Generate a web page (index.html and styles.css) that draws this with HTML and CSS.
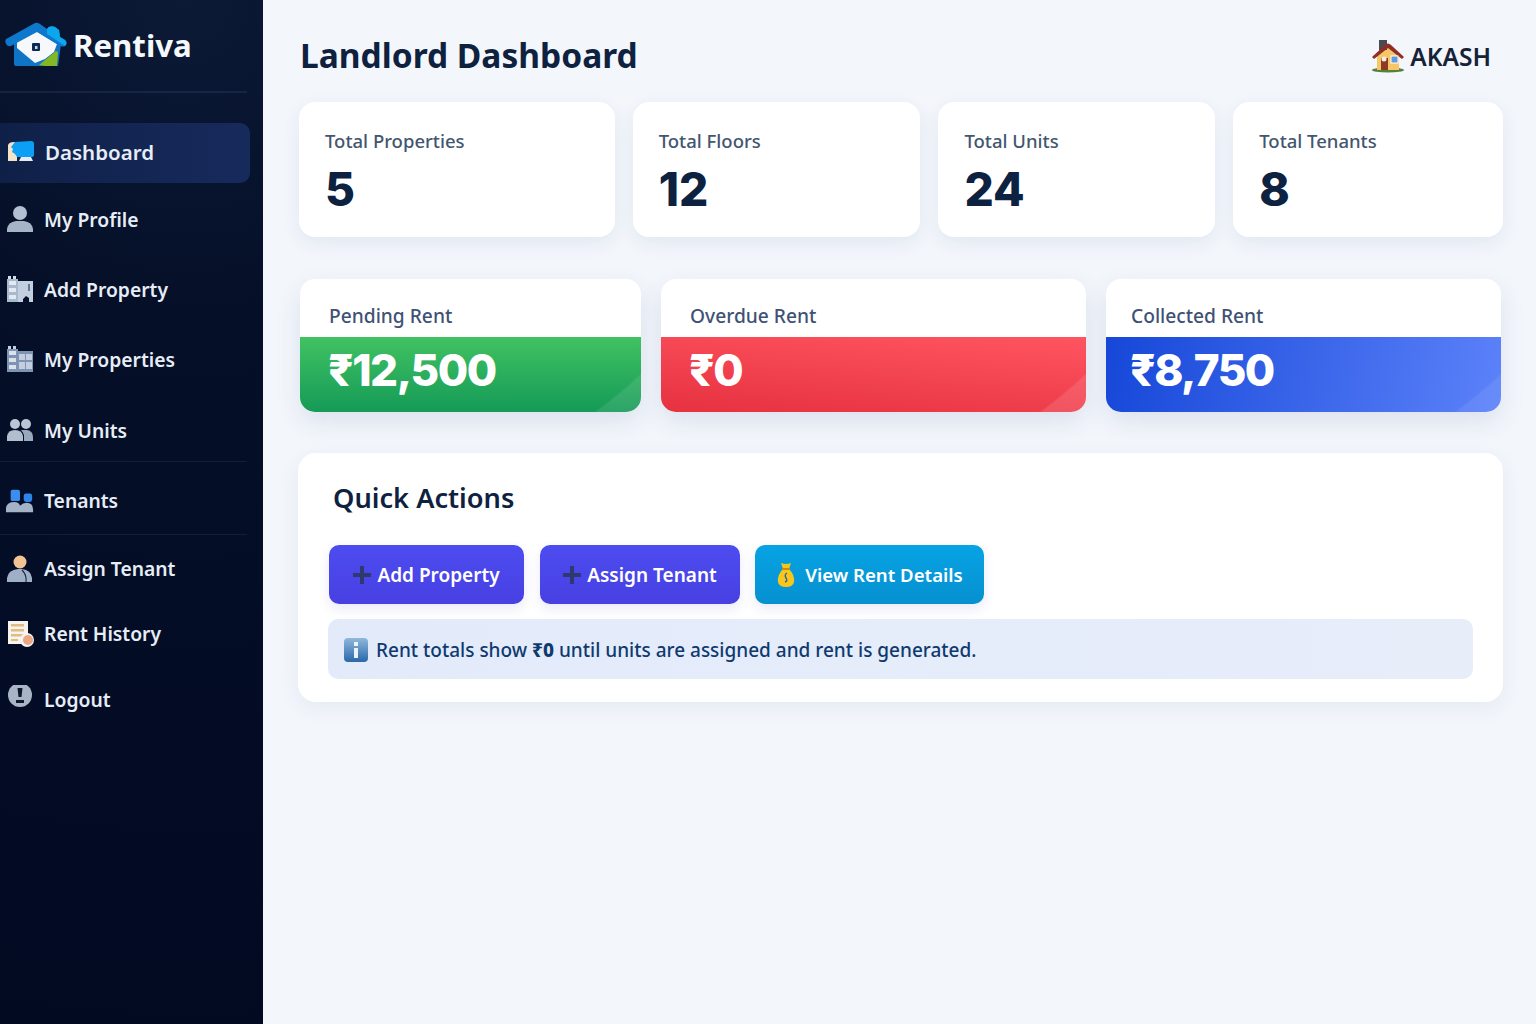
FILE: index.html
```html
<!DOCTYPE html>
<html lang="en">
<head>
<meta charset="utf-8">
<title>Rentiva</title>
<link rel="stylesheet" href="styles.css">
</head>
<body>
<div class="app">
<aside class="sidebar">
  <div class="brand">
    <svg class="logo" viewBox="0 0 62 46" width="62" height="46">
      <path d="M9 20 L9 42 Q9 44 11 44 L53 44 L56 22 L31 6Z" fill="#0f74c6"/>
      <path d="M12 20 L31 9 L52 22 L49 30 L40 37 L30 41 L12 26Z" fill="#f6f8fb"/>
      <path d="M34 43 L51 29 L53 30 L52 44 L40 44Z" fill="#84b822"/>
      <path d="M1 22 Q-1 17 3 16 L30 1 Q32 0 35 2 L42 7 Q44 3 50 5 L54 8 L55 15 L60 18 Q63 21 60 24 Q58 25 55 24 L32 10 L6 24 Q3 25 1 22Z" fill="#0d78cc"/>
      <path d="M42 7 Q44 3 50 5 L54 8 L55 15 L60 18 Q63 21 60 24 L42 12Z" fill="#0ca6ec"/>
      <rect x="27" y="21" width="8" height="8" rx="1" fill="#0b2a55"/>
      <rect x="30" y="24" width="2.500" height="3" fill="#c8d8ea"/>
    </svg>
    <span class="brand-name">Rentiva</span>
  </div>
  <div class="rule brand-rule"></div>
  <nav class="nav">
    <a class="item active"><svg class="ico" viewBox="0 0 28 24"><path d="M1 5 Q2 2 7 2 L10 3 L10 21 L1 21Z" fill="#f4e3c8"/><path d="M8 2 L24 1 Q27 1 27 4 L27 15 Q27 17 24 17 L10 17 L8 14 L5 12 L6 9 L4 7Z" fill="#0ba0f5"/><path d="M14 17 H24 L26 21 H12Z" fill="#e8edf3"/></svg><span>Dashboard</span></a>
    <a class="item profile"><svg class="ico" viewBox="0 0 28 28"><circle cx="14" cy="8" r="7" fill="#b3c0d2"/><path d="M1 27 V24 Q2 17 10 16 H18 Q26 17 27 24 V27Z" fill="#a6b4c8"/></svg><span>My Profile</span></a>
    <a class="item addprop"><svg class="ico" viewBox="0 0 28 28"><path d="M1 4 H12 V27 H1Z" fill="#a8b8cf"/><rect x="2" y="1" width="3" height="3" fill="#d5deea"/><rect x="7" y="1" width="3" height="3" fill="#d5deea"/><g fill="#e3e9f1"><rect x="3" y="6" width="7" height="4"/><rect x="3" y="13" width="7" height="4"/><rect x="3" y="20" width="7" height="4"/></g><path d="M12 6 H27 V27 H23 V23 L20 21 L17 24 V27 H12Z" fill="#c3cfde"/><rect x="22" y="9" width="2" height="7" fill="#64789a"/></svg><span>Add Property</span></a>
    <a class="item myprops"><svg class="ico" viewBox="0 0 28 28"><path d="M1 4 H12 V27 H1Z" fill="#7f93b2"/><rect x="2" y="1" width="3" height="3" fill="#c5d0df"/><rect x="7" y="1" width="3" height="3" fill="#c5d0df"/><g fill="#dbe2ec"><rect x="3" y="6" width="7" height="4"/><rect x="3" y="13" width="7" height="4"/><rect x="3" y="20" width="7" height="4"/></g><rect x="12" y="6" width="15" height="21" fill="#7f93b2"/><g fill="#c3cfde"><rect x="13" y="9" width="6" height="6"/><rect x="20" y="9" width="6" height="6"/><rect x="13" y="17" width="6" height="7"/><rect x="20" y="17" width="6" height="7"/></g></svg><span>My Properties</span></a>
    <a class="item units"><svg class="ico" viewBox="0 0 28 24"><circle cx="9" cy="6" r="5" fill="#b8c5d6"/><circle cx="20" cy="6" r="5" fill="#b8c5d6"/><path d="M1 23 V18 Q2 12 9 12 Q16 12 17 18 V23Z" fill="#b0bed0"/><path d="M18 23 V17 Q17 14 15 12 L21 12 Q27 13 27 19 V23Z" fill="#98a8bd"/></svg><span>My Units</span></a>
    <div class="rule"></div>
    <a class="item tenants"><svg class="ico" viewBox="0 0 30 26"><rect x="5" y="1" width="10" height="12" rx="2" fill="#3b8df0"/><rect x="19" y="5" width="9" height="9" rx="2.500" fill="#2f84ea"/><path d="M0 25 V20 Q1 14 9 14 Q14 14 15 18 Q18 15 22 15 Q29 15 29 22 V25Z" fill="#a4b3c8"/></svg><span>Tenants</span></a>
    <div class="rule"></div>
    <a class="item assign"><svg class="ico" viewBox="0 0 28 28"><circle cx="14" cy="7" r="6.500" fill="#f2c493"/><path d="M1 27 V23 Q2 15 12 14 H16 Q25 15 26 23 V27Z" fill="#9fb0c6"/><path d="M16 15 Q21 20 20 27" stroke="#172a48" stroke-width="1.200" fill="none"/></svg><span>Assign Tenant</span></a>
    <a class="item history"><svg class="ico" viewBox="0 0 28 28"><rect x="2" y="1" width="20" height="23" fill="#f7f5ef"/><g fill="#e2bc82"><rect x="5" y="4" width="13" height="2.500"/><rect x="5" y="9" width="13" height="2.500"/><rect x="5" y="14" width="13" height="2.500"/><rect x="5" y="19" width="7" height="2"/></g><circle cx="21" cy="20" r="7" fill="#f3f4f6"/><circle cx="22" cy="20" r="5" fill="#eda682"/></svg><span>Rent History</span></a>
    <a class="item logout"><svg class="ico" viewBox="0 0 28 28"><circle cx="14" cy="10" r="12" fill="#a9b5c6"/><path d="M11.500 3 H16.500 L15.500 12 H12.500Z" fill="#10192c"/><path d="M10 15 H18 V18 H10Z" fill="#10192c"/></svg><span>Logout</span></a>
  </nav>
</aside>
<main class="main">
  <header class="top">
    <h1>Landlord Dashboard</h1>
    <div class="user">
      <svg viewBox="0 0 34 34" width="34" height="34"><ellipse cx="17" cy="31" rx="16" ry="2.500" fill="#55813a"/><path d="M6 14 L17 6 L28 14 V31 H6Z" fill="#f6c667"/><rect x="8" y="1" width="8" height="10" fill="#4a4a50"/><path d="M1 18 L14 6 Q17 3 20 6 L33 18 L31 20 L17 9 L3 20Z" fill="#8f2d26"/><path d="M10 19 H17 V31 H10Z" fill="#8d3a25"/><circle cx="13" cy="20" r="2.500" fill="#f3efe6"/><rect x="20" y="17" width="7" height="7" fill="#5e9be0" stroke="#fff"/></svg>
      <span>AKASH</span>
    </div>
  </header>
  <section class="stats">
    <div class="card c1"><p>Total Properties</p><b>5</b></div>
    <div class="card c2"><p>Total Floors</p><b>12</b></div>
    <div class="card c3"><p>Total Units</p><b>24</b></div>
    <div class="card c4"><p>Total Tenants</p><b>8</b></div>
  </section>
  <section class="rents">
    <div class="rent r1"><p>Pending Rent</p><div class="amt green">₹12,500</div></div>
    <div class="rent r2"><p>Overdue Rent</p><div class="amt red">₹0</div></div>
    <div class="rent r3"><p>Collected Rent</p><div class="amt blue">₹8,750</div></div>
  </section>
  <section class="quick">
    <h2>Quick Actions</h2>
    <div class="btns">
      <a class="btn indigo b1"><svg viewBox="0 0 18 18" width="18" height="18"><path d="M7 0 H11 V7 H18 V11 H11 V18 H7 V11 H0 V7 H7Z" fill="#2d3a6e"/></svg>Add Property</a>
      <a class="btn indigo b2"><svg viewBox="0 0 18 18" width="18" height="18"><path d="M7 0 H11 V7 H18 V11 H11 V18 H7 V11 H0 V7 H7Z" fill="#2d3a6e"/></svg>Assign Tenant</a>
      <a class="btn sky b3"><svg viewBox="0 0 20 26" width="20" height="26"><path d="M5 1 Q10 3 15 1 L13 7 H7Z" fill="#f5c518"/><path d="M7 7 H13 Q19 13 18 20 Q17 25 10 25 Q3 25 2 20 Q1 13 7 7Z" fill="#f8c61c"/><rect x="6.500" y="6" width="7" height="2" fill="#d4860f"/><path d="M11 11 Q8 13 10 16 Q12 19 9 20" stroke="#2a6a9a" stroke-width="1.400" fill="none"/></svg>View Rent Details</a>
    </div>
    <div class="note">
      <svg viewBox="0 0 26 26" width="26" height="26"><defs><linearGradient id="ig" x1="0" y1="0" x2="0" y2="1"><stop offset="0" stop-color="#8fb8dc"/><stop offset="1" stop-color="#2a68a8"/></linearGradient></defs><rect x="1" y="1" width="24" height="24" rx="4" fill="url(#ig)"/><rect x="11" y="5" width="4" height="4" fill="#eef4fb"/><rect x="11" y="11" width="4" height="10" fill="#eef4fb"/></svg>
      <span>Rent totals show <b>₹0</b> until units are assigned and rent is generated.</span>
    </div>
  </section>
</main>
</div>
</body>
</html>
```

FILE: styles.css
```css
* { box-sizing: border-box; }
html, body { margin: 0; height: 100%; }
body { font-family: "Noto Sans", "Open Sans", sans-serif; background: #f3f6fb; color: #0f213f; overflow: hidden; }
p, h1, h2 { margin: 0; }
.app { display: flex; height: 1024px; }

.sidebar { width: 263px; flex: none; background: radial-gradient(circle at 70% 0%, #0c1a36 0, #050f28 30%, #020a22 100%); box-shadow: 4px 0 14px rgba(30,50,90,.1); color: #eef3fa; }
.brand { display: flex; align-items: center; height: 91px; padding: 0 0 0 5px; }
.logo { margin-top: -2px; }
.brand-name { font-size: 31.200px; font-weight: 700; margin: -2px 0 0 6px; color: #f5f8fc; }
.rule { height: 1px; width: 247px; background: rgba(120,145,190,.12); }
.brand-rule { height: 2px; margin-bottom: 30px; }
.nav { display: flex; flex-direction: column; }
.item { display: flex; align-items: center; gap: 10px; padding-left: 6px; font-size: 19.300px; font-weight: 600; color: #e6edf6; height: 60px; }
.ico { width: 28px; height: 28px; flex: none; }
.active { width: 250px; background: linear-gradient(90deg, #0f2048, #172a5c); border-radius: 0 10px 10px 0; padding: 0 0 2px 7px; font-size: 20.500px; margin-bottom: 7px; }
.profile, .addprop, .myprops, .units { padding-bottom: 2px; }
.profile { margin-bottom: 10px; }
.addprop { margin-bottom: 10px; }
.myprops { margin-bottom: 11px; }
.tenants { height: 72px; padding-top: 5px; }
.assign { height: 66px; padding-top: 1px; }
.history { height: 65px; }
.logout { height: 65px; padding-top: 1px; }

.main { flex: 1; min-width: 0; padding: 0 33px 0 35px; background: #f3f6fb; }
.top { display: flex; align-items: center; justify-content: space-between; height: 102px; padding: 8px 12px 0 2px; }
h1 { font-size: 33.500px; font-weight: 700; color: #0e2240; }
.user { display: flex; align-items: center; gap: 5px; margin-top: 2px; font-size: 24.500px; font-weight: 600; color: #152238; }
.stats { display: flex; gap: 18px; margin-left: 1px; }
.card { height: 135px; background: #fff; border-radius: 16px; padding: 26px 26px 0; box-shadow: 0 6px 18px rgba(60,85,140,.09); }
.card p { font-size: 18.500px; font-weight: 500; color: #43566f; line-height: 26px; }
.card b { display: block; font-family: Inter, "Noto Sans", sans-serif; font-size: 46px; font-weight: 800; line-height: 62px; margin-top: 4px; color: #0d2240; }
.c1 { width: 316px; }
.c2 { width: 288px; }
.c3 { width: 277px; }
.c4 { width: 270px; }

.rents { display: flex; margin: 42px 0 0 2px; gap: 20px; }
.rent { height: 133px; background: #fff; border-radius: 15px; overflow: hidden; box-shadow: 0 10px 24px rgba(60,85,140,.12); display: flex; flex-direction: column; }
.rent p { height: 58px; padding: 23px 0 0 29px; font-size: 19.200px; font-weight: 500; line-height: 28px; color: #3f5275; }
.r1 { width: 341px; }
.r2 { width: 425px; }
.r3 { width: 395px; }
.r3 p { padding-left: 25px; }
.amt { flex: 1; font-family: Inter, "Noto Sans", sans-serif; font-size: 44px; font-weight: 800; color: #fff; line-height: 67px; padding-left: 28px; letter-spacing: -1.500px; }
.r3 .amt { padding-left: 24px; }
.green { background: radial-gradient(circle 500px at calc(100% - 341px) calc(100% - 402px), transparent 99.500%, rgba(255,255,255,.1) 100%), linear-gradient(0deg, #159a57, #41c262); }
.red { background: radial-gradient(circle 500px at calc(100% - 341px) calc(100% - 402px), transparent 99.500%, rgba(255,255,255,.12) 100%), linear-gradient(5deg, #e63140, #ff5560); }
.blue { background: radial-gradient(circle 500px at calc(100% - 341px) calc(100% - 402px), transparent 99.500%, rgba(255,255,255,.08) 100%), linear-gradient(100deg, #1647d8, #5c82fa); }

.quick { margin: 41px 0 0 0; height: 249px; background: #fff; border-radius: 18px; padding: 26px 30px 0; box-shadow: 0 6px 20px rgba(60,85,140,.08); }
h2 { font-size: 27.200px; font-weight: 600; line-height: 38px; color: #0e2240; margin-left: 5px; }
.btns { display: flex; gap: 15px; margin: 28px 0 0 1px; }
.btn { display: flex; align-items: center; justify-content: center; gap: 6px; height: 59px; border-radius: 10px; color: #fff; font-size: 19px; font-weight: 600; box-shadow: 0 5px 12px rgba(70,80,200,.12); }
.indigo { background: linear-gradient(180deg, #4d4cf0, #4740e2); }
.sky { background: linear-gradient(180deg, #07a3e4, #0690d0); gap: 9px; font-size: 18.600px; }
.b1 { width: 195px; }
.b2 { width: 200px; margin-left: 1px; }
.b3 { width: 229px; }
.note { display: flex; align-items: center; gap: 7px; margin-top: 15px; padding: 2px 0 0 15px; height: 60px; background: linear-gradient(90deg, #e3ebfb, #e7edf9); border-radius: 10px; width: 1145px; font-size: 19px; font-weight: 500; color: #0f3a70; }
.note b { font-weight: 800; }
```
